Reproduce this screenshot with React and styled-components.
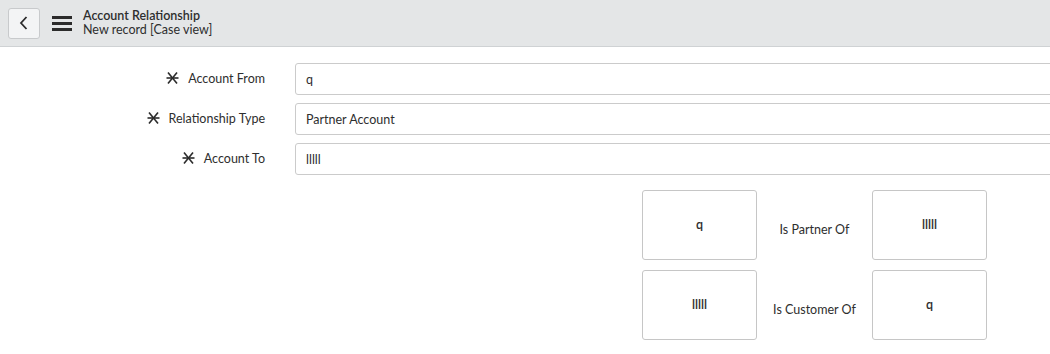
import React from "react";
import styled, { createGlobalStyle } from "styled-components";

const GlobalStyle = createGlobalStyle`
  html, body {
    margin: 0;
    padding: 0;
    background: #ffffff;
    font-family: Lato, "Liberation Sans", sans-serif;
    color: #2e2e2e;
    overflow: hidden;
  }
`;

const Page = styled.div`
  width: 1050px;
  height: 354px;
  overflow: hidden;
`;

const Header = styled.header`
  height: 46px;
  background: #e4e6e7;
  border-bottom: 1px solid #cfd2d4;
  display: flex;
  align-items: center;
  padding-left: 8px;
`;

const BackButton = styled.button`
  width: 32px;
  height: 31px;
  padding: 0;
  margin: 0;
  border: 1px solid #c8cacc;
  border-radius: 3px;
  background: #f3f4f5;
  display: flex;
  align-items: center;
  justify-content: center;
  color: #2e2e2e;
`;

const Burger = styled.div`
  width: 20px;
  margin-left: 12px;
  display: flex;
  flex-direction: column;
  gap: 3px;

  span {
    display: block;
    height: 3px;
    background: #2b2b2b;
  }
`;

const Titles = styled.div`
  margin-left: 11px;
  display: flex;
  flex-direction: column;
  font-size: 12.5px;
  line-height: 14px;
  margin-top: -1px;
`;

const Title = styled.div`
  font-weight: ${(p) => (p.$strong ? 600 : 400)};
`;

const Form = styled.div`
  padding-top: 16px;
  display: flex;
  flex-direction: column;
  gap: 8px;
`;

const Row = styled.div`
  display: grid;
  grid-template-columns: 265px 1fr;
  column-gap: 30px;
  align-items: center;
`;

const Label = styled.label`
  display: flex;
  justify-content: flex-end;
  align-items: center;
  gap: 9px;
  font-size: 12.5px;
  padding-bottom: 2px;
`;

const Input = styled.div`
  height: 30px;
  width: 900px;
  border: 1px solid #cbcbcb;
  border-radius: 3px;
  display: flex;
  align-items: center;
  padding-left: 10px;
  font-size: 12.5px;
  box-sizing: content-box;
`;

const Relations = styled.div`
  margin: 15px 0 0 642px;
  display: grid;
  grid-template-columns: 115px 115px 115px;
  row-gap: 10px;
`;

const Box = styled.div`
  height: 70px;
  border: 1px solid #c6c6c6;
  border-radius: 3px;
  display: flex;
  align-items: center;
  justify-content: center;
  font-size: 12.5px;
  font-weight: 600;
  padding-bottom: 2px;
  box-sizing: border-box;
`;

const Verb = styled.div`
  display: flex;
  align-items: center;
  justify-content: center;
  font-size: 12.5px;
  padding-top: 8px;
`;

const Asterisk = () => (
  <svg width="13" height="12" viewBox="0 0 13 12" fill="none" stroke="#2b2b2b" strokeWidth="1.6">
    <line x1="0.5" y1="6" x2="12.5" y2="6" />
    <line x1="2" y1="0.5" x2="11" y2="11.5" />
    <line x1="11" y1="0.5" x2="2" y2="11.5" />
  </svg>
);

const fields = [
  { label: "Account From", value: "q" },
  { label: "Relationship Type", value: "Partner Account" },
  { label: "Account To", value: "lllll" },
];

const relations = [
  ["q", "Is Partner Of", "lllll"],
  ["lllll", "Is Customer Of", "q"],
];

export default function App() {
  return (
    <Page>
      <GlobalStyle />
      <Header>
        <BackButton aria-label="Back">
          <svg width="10" height="14" viewBox="0 0 10 14" fill="none" stroke="#2b2b2b" strokeWidth="1.8">
            <polyline points="7.5,1 2,7 7.5,13" />
          </svg>
        </BackButton>
        <Burger>
          <span />
          <span />
          <span />
        </Burger>
        <Titles>
          <Title $strong>Account Relationship</Title>
          <Title>New record [Case view]</Title>
        </Titles>
      </Header>
      <Form>
        {fields.map((f) => (
          <Row key={f.label}>
            <Label>
              <Asterisk />
              {f.label}
            </Label>
            <Input>{f.value}</Input>
          </Row>
        ))}
      </Form>
      <Relations>
        {relations.map(([a, verb, b]) => (
          <React.Fragment key={verb}>
            <Box>{a}</Box>
            <Verb>{verb}</Verb>
            <Box>{b}</Box>
          </React.Fragment>
        ))}
      </Relations>
    </Page>
  );
}
